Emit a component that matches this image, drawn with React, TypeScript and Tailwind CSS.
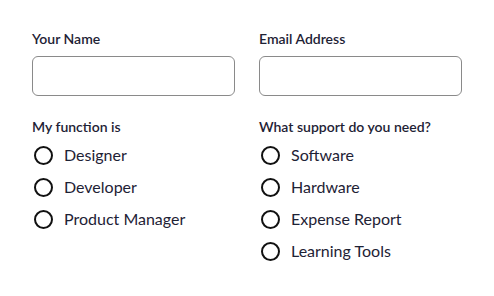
import React from "react";

const font = { fontFamily: "Lato, 'Noto Sans', sans-serif" };

function Radio({ label }: { label: string }) {
  return (
    <label className="flex h-8 items-center gap-[11px] cursor-pointer">
      <span className="ml-[2px] h-[19px] w-[19px] rounded-full border-2 border-[#111111] bg-white" />
      <span className="text-[16px] text-[#1e2235]">{label}</span>
    </label>
  );
}

function Field({ label }: { label: string }) {
  return (
    <div className="flex flex-col">
      <span className="h-5 text-[14px] font-semibold leading-5 text-[#1e2235]">{label}</span>
      <input className="mt-[7px] h-10 w-full rounded-[6px] border border-[#8a8a8a] bg-white px-3 outline-none" />
    </div>
  );
}

export default function App() {
  return (
    <div className="min-h-screen w-full bg-white" style={font}>
      <div className="grid grid-cols-2 gap-x-6 px-8 pt-[29px] w-[494px] pr-[32px]">
        <Field label="Your Name" />
        <Field label="Email Address" />

        <div className="mt-[21px] flex flex-col">
          <span className="h-5 text-[14px] font-semibold leading-5 text-[#1e2235]">My function is</span>
          <div className="mt-[2px] flex flex-col">
            <Radio label="Designer" />
            <Radio label="Developer" />
            <Radio label="Product Manager" />
          </div>
        </div>
        <div className="mt-[21px] flex flex-col">
          <span className="h-5 text-[14px] font-semibold leading-5 text-[#1e2235]">What support do you need?</span>
          <div className="mt-[2px] flex flex-col">
            <Radio label="Software" />
            <Radio label="Hardware" />
            <Radio label="Expense Report" />
            <Radio label="Learning Tools" />
          </div>
        </div>
      </div>
    </div>
  );
}
